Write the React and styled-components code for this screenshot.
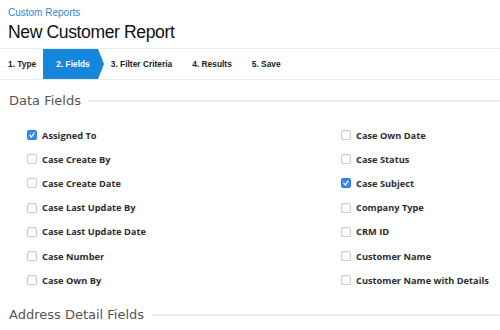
import React from 'react';
import styled, { createGlobalStyle } from 'styled-components';

const GlobalStyle = createGlobalStyle`
  html, body {
    margin: 0;
    padding: 0;
    background: #fff;
  }
  body {
    font-family: "Liberation Sans", Arial, sans-serif;
    width: 500px;
    height: 330px;
    overflow: hidden;
  }
`;

const Page = styled.div`
  width: 500px;
  height: 330px;
  overflow: hidden;
`;

const Header = styled.div`
  padding: 7px 8px 0 8px;
`;

const Crumb = styled.a`
  display: block;
  font-size: 10px;
  line-height: 12px;
  color: #2f86d6;
  text-decoration: none;
`;

const Title = styled.h1`
  margin: 2px 0 0 0;
  font-size: 17.6px;
  line-height: 22px;
  font-weight: normal;
  color: #111;
  letter-spacing: -0.4px;
`;

const Steps = styled.div`
  display: flex;
  gap: 20px;
  height: 30px;
  margin-top: 5px;
  padding-left: 8px;
  border-top: 1px solid #ececec;
  border-bottom: 1px solid #ececec;
`;

const Step = styled.div`
  position: relative;
  display: flex;
  align-items: center;
  padding: ${(p) => (p.$active ? '0 8px 0 13px' : '0')};
  margin: ${(p) => (p.$active ? '0 -7px 0 -13px' : '0')};
  background: ${(p) => (p.$active ? '#1685dc' : 'transparent')};
  color: ${(p) => (p.$active ? '#fff' : '#222')};
  font-size: 8.4px;
  font-weight: bold;
  white-space: nowrap;

  ${(p) =>
    p.$active &&
    `
    &::after {
      content: '';
      position: absolute;
      right: -6px;
      top: 0;
      border-top: 15px solid transparent;
      border-bottom: 15px solid transparent;
      border-left: 6px solid #1685dc;
    }
  `}
`;

const Section = styled.div`
  display: flex;
  align-items: center;
  gap: 8px;
  padding-left: 9px;
  margin-top: ${(p) => p.$top || '13px'};
  font-family: "DejaVu Sans", sans-serif;
  font-size: 13px;
  color: #555;
  white-space: nowrap;

  &::after {
    content: '';
    flex: 1;
    height: 2px;
    background: #ebebeb;
  }
`;

const Grid = styled.div`
  display: grid;
  grid-template-columns: 314px 1fr;
  grid-auto-flow: column;
  grid-template-rows: repeat(7, 24.2px);
  padding: 15px 0 0 27px;
`;

const Field = styled.label`
  display: flex;
  align-items: center;
  gap: 5px;
  font-family: "Open Sans", sans-serif;
  font-size: 9.25px;
  font-weight: 700;
  color: #2e2e2e;
  white-space: nowrap;
`;

const Box = styled.span`
  display: inline-flex;
  align-items: center;
  justify-content: center;
  width: 8px;
  height: 8px;
  border-radius: 2px;
  border: 1px solid ${(p) => (p.$checked ? '#2a7de0' : '#cacaca')};
  background: ${(p) => (p.$checked ? '#3b8cf0' : '#fff')};
  box-shadow: inset 0 1px 1px rgba(0, 0, 0, 0.06);
`;

const steps = ['1. Type', '2. Fields', '3. Filter Criteria', '4. Results', '5. Save'];

const fields = [
  ['Assigned To', true],
  ['Case Create By', false],
  ['Case Create Date', false],
  ['Case Last Update By', false],
  ['Case Last Update Date', false],
  ['Case Number', false],
  ['Case Own By', false],
  ['Case Own Date', false],
  ['Case Status', false],
  ['Case Subject', true],
  ['Company Type', false],
  ['CRM ID', false],
  ['Customer Name', false],
  ['Customer Name with Details', false],
];

function Check({ checked }) {
  return (
    <Box $checked={checked}>
      {checked && (
        <svg width="6" height="6" viewBox="0 0 7 7">
          <path d="M1 3.8 L2.8 5.6 L6 1.2" fill="none" stroke="#fff" strokeWidth="1.4" strokeLinecap="round" strokeLinejoin="round" />
        </svg>
      )}
    </Box>
  );
}

export default function App() {
  return (
    <Page>
      <GlobalStyle />
      <Header>
        <Crumb href="#">Custom Reports</Crumb>
        <Title>New Customer Report</Title>
      </Header>
      <Steps>
        {steps.map((s, i) => (
          <Step key={s} $active={i === 1}>
            {s}
          </Step>
        ))}
      </Steps>
      <Section>Data Fields</Section>
      <Grid>
        {fields.map(([name, checked]) => (
          <Field key={name}>
            <Check checked={checked} />
            {name}
          </Field>
        ))}
      </Grid>
      <Section $top="15px">Address Detail Fields</Section>
    </Page>
  );
}
